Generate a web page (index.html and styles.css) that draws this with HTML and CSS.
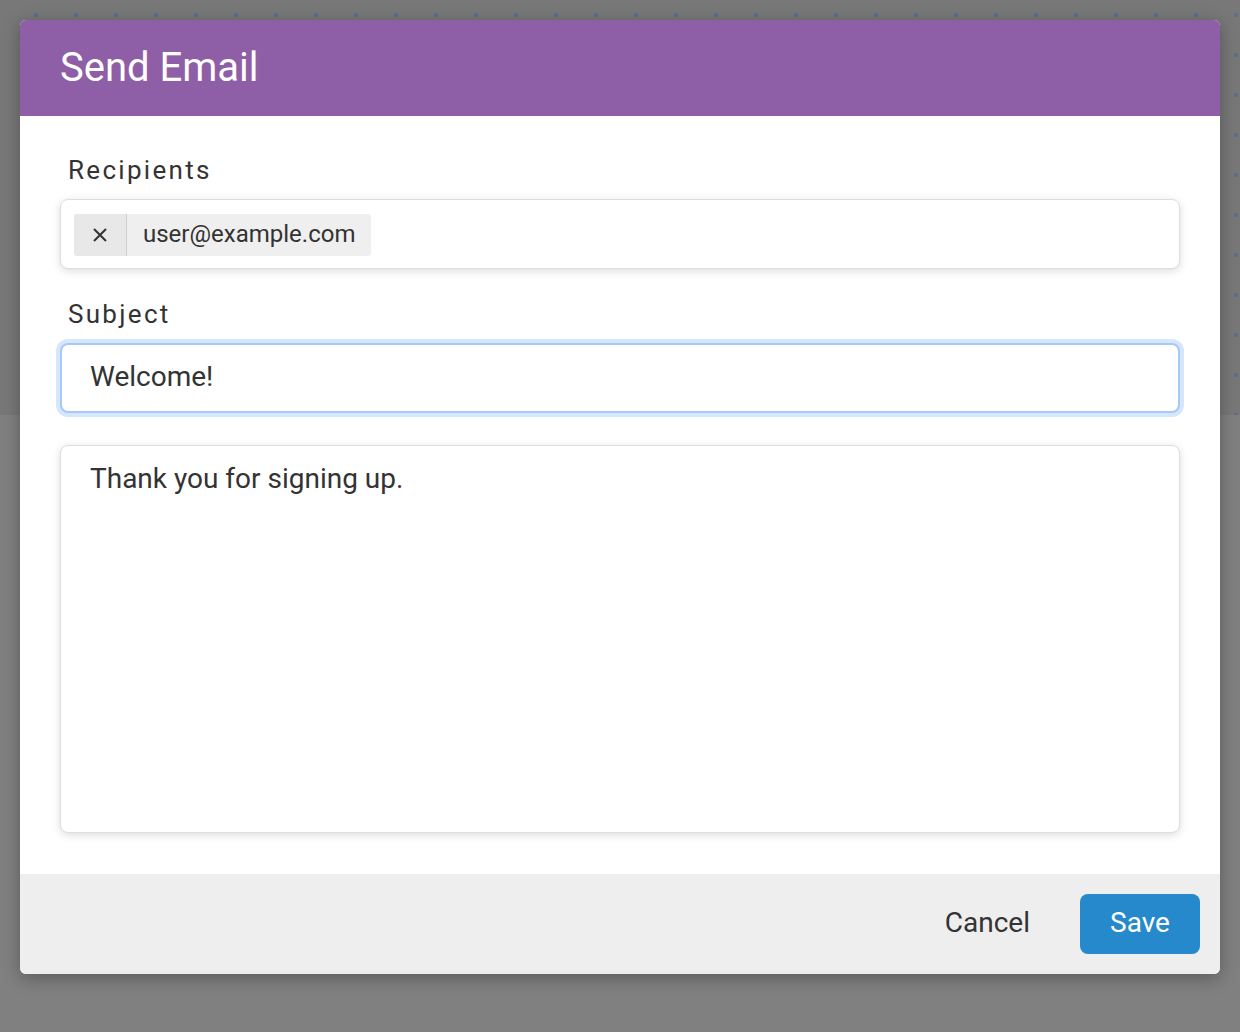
FILE: index.html
```html
<!DOCTYPE html>
<html lang="en">
<head>
<meta charset="utf-8">
<title>Send Email</title>
<link rel="stylesheet" href="styles.css">
</head>
<body>
<div class="backdrop"></div>
<div class="overlay">
  <div class="modal">
    <div class="modal-header">
      <h1 class="modal-title">Send Email</h1>
    </div>
    <div class="modal-body">
      <label class="field-label">Recipients</label>
      <div class="field tags-field">
        <span class="chip">
          <span class="chip-remove">
            <svg width="16" height="16" viewBox="0 0 16 16"><path d="M2 2 L14 14 M14 2 L2 14" stroke="#333" stroke-width="2" fill="none"/></svg>
          </span>
          <span class="chip-text">user@example.com</span>
        </span>
      </div>
      <label class="field-label label-subject">Subject</label>
      <div class="field input-field focused">Welcome!</div>
      <div class="field textarea-field">Thank you for signing up.</div>
    </div>
    <div class="modal-footer">
      <button class="btn btn-cancel">Cancel</button>
      <button class="btn btn-save">Save</button>
    </div>
  </div>
</div>
</body>
</html>
```
FILE: styles.css
```css
html, body {
  margin: 0;
  padding: 0;
  height: 100%;
}
body {
  background: #808080;
  font-family: Roboto, "Liberation Sans", sans-serif;
  color: #333;
  position: relative;
  overflow: hidden;
}
.backdrop {
  position: absolute;
  left: 0;
  top: 0;
  right: 0;
  height: 415px;
  background-color: #787878;
  background-image: radial-gradient(circle, #5b7088 1.8px, transparent 2.4px);
  background-size: 40px 40px;
  background-position: 16px -5px;
}
.overlay {
  position: relative;
  padding: 20px;
}
.modal {
  background: #fff;
  border-radius: 6px;
  overflow: hidden;
  box-shadow: 0 4px 18px rgba(0, 0, 0, 0.3);
  display: flex;
  flex-direction: column;
}
.modal-header {
  background: #8e5ea6;
  height: 96px;
  display: flex;
  align-items: center;
  padding: 0 40px;
}
.modal-title {
  margin: 0;
  color: #fff;
  font-weight: 400;
  font-size: 40px;
  line-height: 1;
}
.modal-body {
  padding: 36px 40px 41px;
  display: flex;
  flex-direction: column;
}
.field-label {
  display: block;
  font-size: 26px;
  line-height: 36px;
  letter-spacing: 2.3px;
  padding-left: 8px;
  margin-bottom: 11px;
  color: #333;
}
.label-subject {
  margin-top: 27px;
}
.field {
  box-sizing: border-box;
  border: 1px solid #dedede;
  border-radius: 8px;
  background: #fff;
  box-shadow: 0 2px 9px rgba(0, 0, 0, 0.14);
}
.tags-field {
  height: 70px;
  padding: 14px 13px;
  display: flex;
  align-items: flex-start;
}
.chip {
  display: flex;
  height: 42px;
  background: #efefef;
  border-radius: 3px;
  align-items: stretch;
}
.chip-remove {
  width: 52px;
  border-right: 1px solid #d0d0d0;
  display: flex;
  align-items: center;
  justify-content: center;
  background: #e8e8e8;
  border-radius: 3px 0 0 3px;
}
.chip-remove svg {
  width: 16px;
  height: 16px;
}
.chip-text {
  display: flex;
  align-items: center;
  padding: 0 16px 2px;
  font-size: 24px;
  color: #333;
}
.input-field {
  height: 70px;
  border: 2px solid #a5c9f8;
  box-shadow: 0 0 0 4px #d6e6fd;
  display: flex;
  align-items: center;
  padding: 0 28px 3px;
  font-size: 28px;
}
.textarea-field {
  margin-top: 32px;
  height: 388px;
  padding: 15px 29px;
  font-size: 28px;
  line-height: 36px;
}
.modal-footer {
  background: #eeeeee;
  height: 100px;
  box-sizing: border-box;
  padding: 20px;
  display: flex;
  justify-content: flex-end;
  align-items: center;
  gap: 34px;
}
.btn {
  font-family: Roboto, "Liberation Sans", sans-serif;
  font-size: 28px;
  border: none;
  height: 60px;
  padding-bottom: 4px;
  border-radius: 8px;
  cursor: pointer;
}
.btn-cancel {
  background: transparent;
  color: #333;
  padding-left: 16px;
  padding-right: 16px;
}
.btn-save {
  background: #2589cc;
  color: #fff;
  width: 120px;
}
```
